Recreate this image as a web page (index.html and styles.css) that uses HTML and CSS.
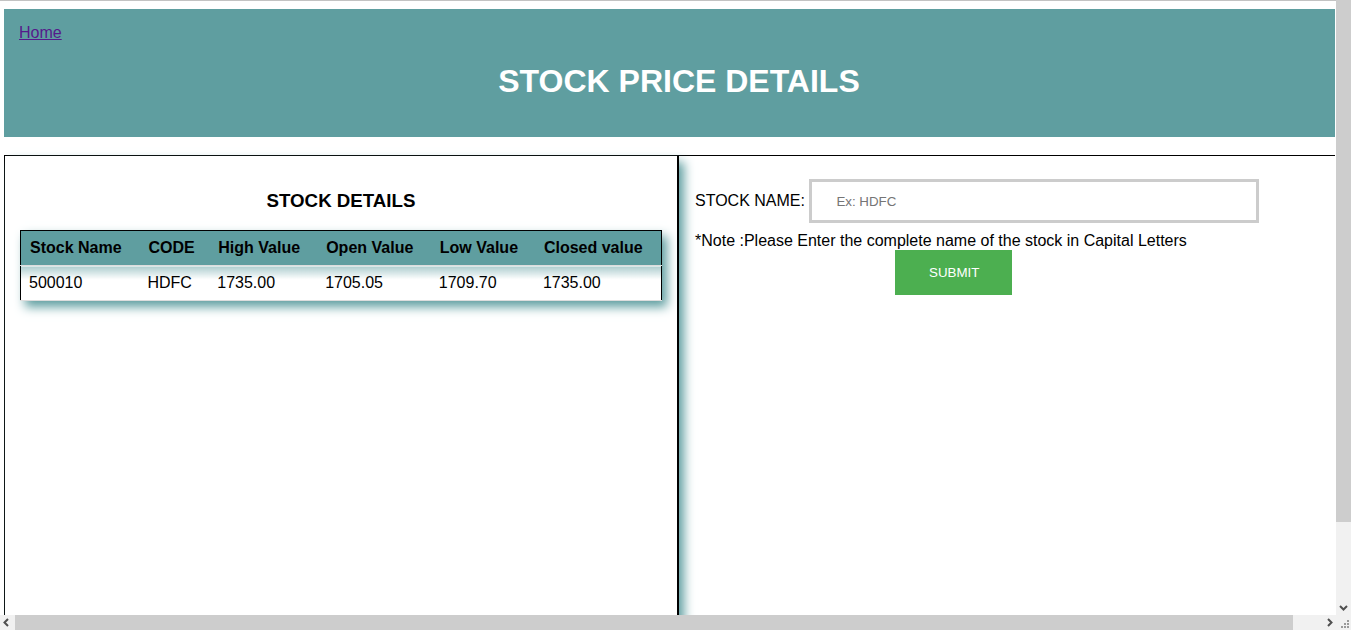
FILE: index.html
```html
<!DOCTYPE html>
<html lang="en">
<head>
<meta charset="utf-8">
<title>Stock Price Details</title>
<link rel="stylesheet" href="styles.css">
</head>
<body>
<header class="top">
  <a class="home" href="#">Home</a>
  <h1 class="title">STOCK PRICE DETAILS</h1>
</header>
<main class="main">
  <section class="left">
    <h3 class="sub">STOCK DETAILS</h3>
    <div class="tablewrap">
      <table class="stocks">
        <thead>
          <tr><th>Stock Name</th><th>CODE</th><th>High Value</th><th>Open Value</th><th>Low Value</th><th>Closed value</th></tr>
        </thead>
        <tbody>
          <tr><td>500010</td><td>HDFC</td><td>1735.00</td><td>1705.05</td><td>1709.70</td><td>1735.00</td></tr>
        </tbody>
      </table>
    </div>
  </section>
  <section class="right">
    <form class="form">
      <div class="row"><label class="lbl" for="sn">STOCK NAME:</label> <input class="inp" id="sn" type="text" placeholder="Ex: HDFC"></div>
      <div class="note">*Note :Please Enter the complete name of the stock in Capital Letters</div>
      <button class="btn" type="button">SUBMIT</button>
    </form>
  </section>
</main>

<div class="vscroll">
  <div class="vthumb"></div>
  <div class="vtrack"></div>
  <div class="arrow">
    <svg width="15" height="15" viewBox="0 0 15 15"><path d="M4 6 L7.5 9.5 L11 6" fill="none" stroke="#505050" stroke-width="2"/></svg>
  </div>
</div>
<div class="hscroll">
  <div class="arrow">
    <svg width="15" height="15" viewBox="0 0 15 15"><path d="M8 4 L4.5 7.5 L8 11" fill="none" stroke="#505050" stroke-width="2"/></svg>
  </div>
  <div class="hthumb"></div>
  <div class="htrack"></div>
  <div class="arrow">
    <svg width="15" height="15" viewBox="0 0 15 15"><path d="M7 4 L10.5 7.5 L7 11" fill="none" stroke="#505050" stroke-width="2"/></svg>
  </div>
  <div class="corner">
    <svg width="15" height="15" viewBox="0 0 15 15" fill="#9a9a9a"><rect x="11" y="5" width="2" height="2"/><rect x="8" y="8" width="2" height="2"/><rect x="11" y="8" width="2" height="2"/><rect x="5" y="11" width="2" height="2"/><rect x="8" y="11" width="2" height="2"/><rect x="11" y="11" width="2" height="2"/></svg>
  </div>
</div>
</body>
</html>
```
FILE: styles.css
```css
html {
  border-top: 1px solid #c3c3c3;
  overflow: hidden;
}
body {
  margin: 8px 16px 8px 4px;
  font-family: "Liberation Sans", Arial, sans-serif;
  font-size: 16px;
  color: #000;
  background: #fff;
}
.top {
  background: #5f9ea0;
  height: 128px;
  box-sizing: border-box;
  padding: 15px 0 0 15px;
}
.home {
  color: #551a8b;
  text-decoration: underline;
  display: inline-block;
}
.title {
  margin: 21px 0 0;
  padding-left: 4px;
  text-align: center;
  color: #fff;
  font-size: 32px;
  font-weight: bold;
}
.main {
  margin-top: 18px;
  width: 1361px;
  height: 545px;
  box-sizing: border-box;
  border: 1px solid #000;
  display: flex;
}
.left {
  width: 674px;
  flex: none;
  box-sizing: border-box;
  border-right: 2px solid #000;
  box-shadow: 5px 6px 10px #5f9ea0;
  padding-top: 16px;
}
.sub {
  margin: 18px 0 18px;
  text-align: center;
  font-size: 18.72px;
  font-weight: bold;
}
.tablewrap {
  padding: 0 15px;
}
.stocks {
  width: 100%;
  border-collapse: collapse;
  border: 1px solid #000;
  box-shadow: 5px 6px 10px #5f9ea0;
}
.stocks th {
  background: #5f9ea0;
  text-align: left;
  font-weight: bold;
  padding: 8px 10px 8px 9px;
  border-bottom: 1px solid #ddd;
  white-space: nowrap;
}
.stocks td {
  padding: 8px 9px 8px 8px;
  border-bottom: 1px solid #ddd;
  white-space: nowrap;
  background: linear-gradient(rgba(95, 158, 160, 0.5), rgba(95, 158, 160, 0) 13px);
}
.right {
  flex: 1;
  padding: 15px 16px;
}
.lbl {
  font-size: 16px;
}
.inp {
  width: 450px;
  height: 44px;
  box-sizing: border-box;
  margin: 8px 0;
  padding: 11px 24px;
  border: 3px solid #ccc;
  font-family: "Liberation Sans", Arial, sans-serif;
  font-size: 13.33px;
  outline: none;
  vertical-align: baseline;
}
.inp::placeholder {
  color: #757575;
}
.note {
  font-size: 16px;
  margin-top: 1px;
}
.btn {
  display: block;
  margin: 0 0 0 200px;
  background: #4caf50;
  color: #fff;
  border: none;
  padding: 15px 33px 15px 34px;
  font-family: "Liberation Sans", Arial, sans-serif;
  font-size: 13.33px;
}

/* simulated browser scrollbars (overlay) */
.vscroll {
  position: fixed;
  top: 0;
  right: 0;
  width: 15px;
  height: 615px;
  display: flex;
  flex-direction: column;
  background: #f1f1f1;
}
.vthumb {
  height: 522px;
  background: #cdcdcd;
}
.vtrack {
  flex: 1;
}
.arrow {
  width: 15px;
  height: 15px;
  flex: none;
}
.arrow svg,
.corner svg {
  display: block;
}
.hscroll {
  position: fixed;
  left: 0;
  bottom: 0;
  width: 1351px;
  height: 15px;
  display: flex;
  background: #f1f1f1;
}
.hthumb {
  width: 1278px;
  flex: none;
  background: #cdcdcd;
}
.htrack {
  flex: 1;
}
.corner {
  width: 15px;
  height: 15px;
  flex: none;
  background: #f1f1f1;
}
```
